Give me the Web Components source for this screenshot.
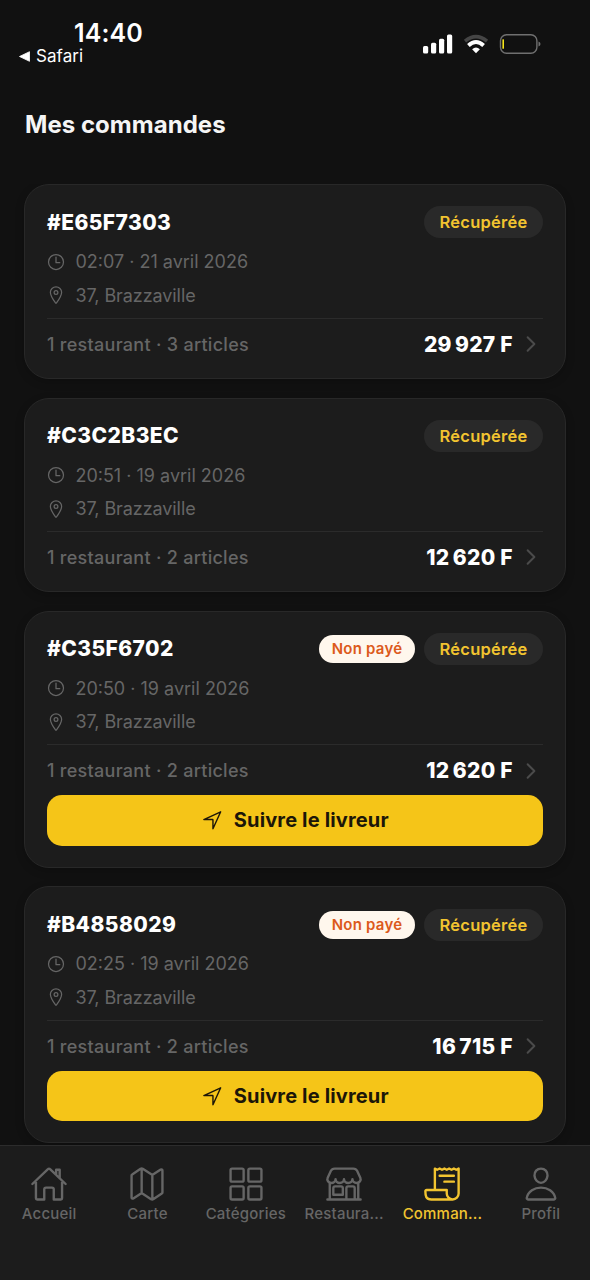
<!DOCTYPE html>
<html lang="fr">
<head>
<meta charset="utf-8">
<title>Mes commandes</title>
<style>
html,body{margin:0;height:100%;background:#111;overflow:hidden}
body{font-family:Inter,"Liberation Sans",sans-serif;color:#fff}
</style>
</head>
<body>
<orders-screen></orders-screen>
<script>
const define = (name, css, html) => customElements.define(name, class extends HTMLElement {
  connectedCallback() {
    if (this.shadowRoot) return;
    const root = this.attachShadow({mode: 'open'});
    root.innerHTML = `<style>*{box-sizing:border-box}${css}</style>${typeof html === 'function' ? html(this) : html}`;
  }
});

const ICONS = {
  home: '<path d="M80 212v236a16 16 0 0016 16h96V328a24 24 0 0124-24h80a24 24 0 0124 24v136h96a16 16 0 0016-16V212M480 256L266.89 52c-5-5.28-16.69-5.34-21.78 0L32 256M400 179V64h-48v69"/>',
  map: '<path d="M313.27 124.64L198.73 51.36a32 32 0 00-29.28.35L56.51 127.49A16 16 0 0048 141.63v295.8a16 16 0 0023.49 14.14l97.82-63.79a32 32 0 0129.5-.24l111.86 73a32 32 0 0029.27-.11l115.43-75.94a16 16 0 008.63-14.2V74.57a16 16 0 00-23.49-14.14l-98 63.86a32 32 0 01-29.24.35zM328 128v336M184 48v336"/>',
  grid: '<rect x="48" y="48" width="176" height="176" rx="20"/><rect x="288" y="48" width="176" height="176" rx="20"/><rect x="48" y="288" width="176" height="176" rx="20"/><rect x="288" y="288" width="176" height="176" rx="20"/>',
  store: '<path d="M448 448V240M64 240v208M382.47 48H129.53c-21.79 0-41.47 12-49.93 30.46L36.3 173c-14.58 31.81 9.63 67.85 47.19 69h2c31.4 0 56.85-25.18 56.85-52.23 0 27 25.46 52.23 56.86 52.23s56.8-23.38 56.8-52.23c0 27 25.45 52.23 56.85 52.23s56.86-23.38 56.86-52.23c0 28.85 25.45 52.23 56.85 52.23h1.95c37.56-1.17 61.77-37.21 47.19-69l-43.3-94.54C423.94 60 404.26 48 382.47 48zM32 464h448M136 288h80a24 24 0 0124 24v88H112v-88a24 24 0 0124-24zM288 464V312a24 24 0 0124-24h64a24 24 0 0124 24v152"/>',
  receipt: '<path d="M160 336V48l32 16 32-16 31.94 16 32.37-16L320 64l31.79-16 31.93 16L416 48l32.01 16L480 48v336a80 80 0 01-80 80 80 80 0 01-80-80v-48H48a15.86 15.86 0 00-16 16c0 64 6.74 112 80 112h288M224 144h192M288 224h128"/>',
  person: '<path d="M344 144c-3.92 52.87-44 96-88 96s-84.15-43.12-88-96c-4-55 35-96 88-96s92 42 88 96zM256 304c-87 0-175.3 48-191.64 138.6C62.39 453.52 68.57 464 80 464h352c11.44 0 17.62-10.48 15.65-21.4C431.3 352 343 304 256 304z"/>',
  time: '<path d="M256 64C150 64 64 150 64 256s86 192 192 192 192-86 192-192S362 64 256 64zM256 128v144h96"/>',
  pin: '<path d="M256 48c-79.5 0-144 61.39-144 137 0 87 96 224.87 131.25 272.49a15.77 15.77 0 0025.5 0C304 409.89 400 272.07 400 185c0-75.61-64.5-137-144-137z"/><circle cx="256" cy="192" r="48"/>',
  navigate: '<path d="M448 64L64 240.14h200a8 8 0 018 8V448z"/>',
  chevron: '<path d="M184 112l144 144-144 144" stroke-width="42"/>'
};

define('line-icon',
  `:host{display:block;flex:none}svg{display:block;width:100%;height:100%;fill:none;stroke:currentColor;stroke-width:32;stroke-linecap:round;stroke-linejoin:round}`,
  el => `<svg viewBox="0 0 512 512">${ICONS[el.getAttribute('name')]}</svg>`);

define('status-bar',
  `:host{display:flex;justify-content:space-between;height:88px;padding:19px 49px 0 19px}
  .time{font-size:25px;line-height:28px;font-weight:580;letter-spacing:.1px;padding-left:55px}
  .back{display:flex;align-items:center;gap:6px;font-size:17px;line-height:18px;letter-spacing:.05px}
  .signals{display:flex;align-items:center;height:50px;gap:10px}
  svg{display:block}`,
  `<div><div class="time">14:40</div><div class="back"><svg width="11" height="11" viewBox="0 0 11 11"><path d="M10.5.7v9.6L.5 5.5z" fill="#fff" stroke="#fff" stroke-width=".8" stroke-linejoin="round"/></svg><span>Safari</span></div></div>
  <div class="signals">
    <svg width="30" height="20" viewBox="0 0 30 20" fill="#fff"><rect x="0" y="12" width="5.2" height="7.5" rx="1.5"/><rect x="8" y="8.7" width="5.2" height="10.8" rx="1.5"/><rect x="16" y="4.8" width="5.2" height="14.7" rx="1.5"/><rect x="24" y="0.5" width="5.2" height="19" rx="1.5"/></svg>
    <svg width="26" height="20" viewBox="0 0 26 20" fill="none" stroke-width="3.6"><path d="M2 7.1Q13-1.8 24 7.1" stroke="#454545"/><path d="M5.4 11.4Q13 4.6 20.6 11.4" stroke="#fff" stroke-width="4"/><path d="M13 19.3l-3.9-4.1q3.9-3.2 7.8 0z" fill="#fff"/></svg>
    <svg width="42" height="20" viewBox="0 0 42 20" fill="none"><rect x="1.5" y=".8" width="36.4" height="18.4" rx="6" stroke="#707070" stroke-width="1.4"/><rect x="3.4" y="5.2" width="1.6" height="9.6" rx=".5" fill="#f5e51b"/><path d="M39.5 7.5q2 .7 2 2.5t-2 2.5z" fill="#707070"/></svg>
  </div>`);

define('status-badge',
  `:host{display:flex;align-items:center;justify-content:center;height:32px;width:119px;border-radius:16px;background:#292929;color:#f2c430;font-size:16.5px;font-weight:640;letter-spacing:.26px;white-space:nowrap}
  :host([unpaid]){width:96px;height:28px;background:#fff7ed;color:#dc5a1b;font-size:15px;letter-spacing:.22px}`,
  `<slot></slot>`);

define('track-button',
  `:host{display:flex;align-items:center;justify-content:center;gap:10px;height:50.6px;margin-top:11.7px;border-radius:15px;background:#f5c518;color:#1c1608;font-size:20px;font-weight:750;letter-spacing:.15px}
  line-icon{width:22.5px;height:22.5px}`,
  `<line-icon name="navigate"></line-icon><slot></slot>`);

define('order-card',
  `:host{display:block;border:1px solid #282828;border-radius:25px;background:#1c1c1c;padding:21.3px 22px 21px;box-shadow:0 3px 10px #0003}
  header{display:flex;align-items:center;gap:9px;height:31.7px}
  h2{margin:0 auto 0 0;font-size:21px;font-weight:760;letter-spacing:.42px}
  .meta{display:flex;align-items:center;gap:9px;height:22px;margin-top:12.5px;margin-left:-.6px;color:#666;font-size:18px;letter-spacing:0}
  .meta + .meta{margin-top:11.5px}
  .meta line-icon{width:20px;height:20px}
  .meta:nth-of-type(2){letter-spacing:-.08px}
  footer{display:flex;align-items:center;border-top:1px solid #2b2b2b;margin-top:11.6px;padding-top:12.4px;height:39.1px}
  .count{color:#666;font-size:18px;font-weight:530;letter-spacing:.28px}
  .price{margin-left:auto;font-size:21px;font-weight:760;letter-spacing:.25px}
  footer line-icon{width:24px;height:24px;margin-left:6.2px;color:#4b4b4b}`,
  el => {
    const a = n => el.getAttribute(n);
    return `<header><h2>${a('ref')}</h2>${el.hasAttribute('unpaid') ? '<status-badge unpaid>Non payé</status-badge>' : ''}<status-badge>Récupérée</status-badge></header>
    <div class="meta"><line-icon name="time"></line-icon><span>${a('date')}</span></div>
    <div class="meta"><line-icon name="pin"></line-icon><span>37, Brazzaville</span></div>
    <footer><span class="count">1 restaurant · ${a('items')} articles</span><span class="price">${a('price')}</span><line-icon name="chevron"></line-icon></footer><slot></slot>`;
  });

define('tab-item',
  `:host{display:flex;flex-direction:column;align-items:center;flex:1 1 0;min-width:0;color:#666}
  :host([active]){color:#f2c430}
  line-icon{width:38px;height:38px}
  span{font-size:15px;line-height:18px;font-weight:540;margin-top:1.6px;letter-spacing:.2px;white-space:nowrap}`,
  el => `<line-icon name="${el.getAttribute('icon')}"></line-icon><span><slot></slot></span>`);

define('tab-bar',
  `:host{display:flex;flex:none;height:135px;background:#1c1c1c;border-top:1px solid #2c2c2c;padding-top:19px}`,
  `<slot></slot>`);

define('orders-screen',
  `:host{display:flex;flex-direction:column;height:1280px;width:590px;overflow:hidden;background:#111}
  h1{margin:0;padding:21px 25px 0;height:96.3px;font-size:24px;line-height:32px;font-weight:730;letter-spacing:.04px;color:#f5f5f5}
  main{flex:1;min-height:0;overflow:hidden;padding:0 24px;display:flex;flex-direction:column;gap:18.6px}
  order-card{flex:none}`,
  `<status-bar></status-bar><h1>Mes commandes</h1>
  <main>
    <order-card ref="#E65F7303" date="02:07 · 21 avril 2026" items="3" price="29&#8239;927&nbsp;F"></order-card>
    <order-card ref="#C3C2B3EC" date="20:51 · 19 avril 2026" items="2" price="12&#8239;620&nbsp;F"></order-card>
    <order-card ref="#C35F6702" date="20:50 · 19 avril 2026" items="2" price="12&#8239;620&nbsp;F" unpaid><track-button>Suivre le livreur</track-button></order-card>
    <order-card ref="#B4858029" date="02:25 · 19 avril 2026" items="2" price="16&#8239;715&nbsp;F" unpaid><track-button>Suivre le livreur</track-button></order-card>
  </main>
  <tab-bar>
    <tab-item icon="home">Accueil</tab-item><tab-item icon="map">Carte</tab-item><tab-item icon="grid">Catégories</tab-item><tab-item icon="store">Restaura...</tab-item><tab-item icon="receipt" active>Comman...</tab-item><tab-item icon="person">Profil</tab-item>
  </tab-bar>`);
</script>
</body>
</html>
